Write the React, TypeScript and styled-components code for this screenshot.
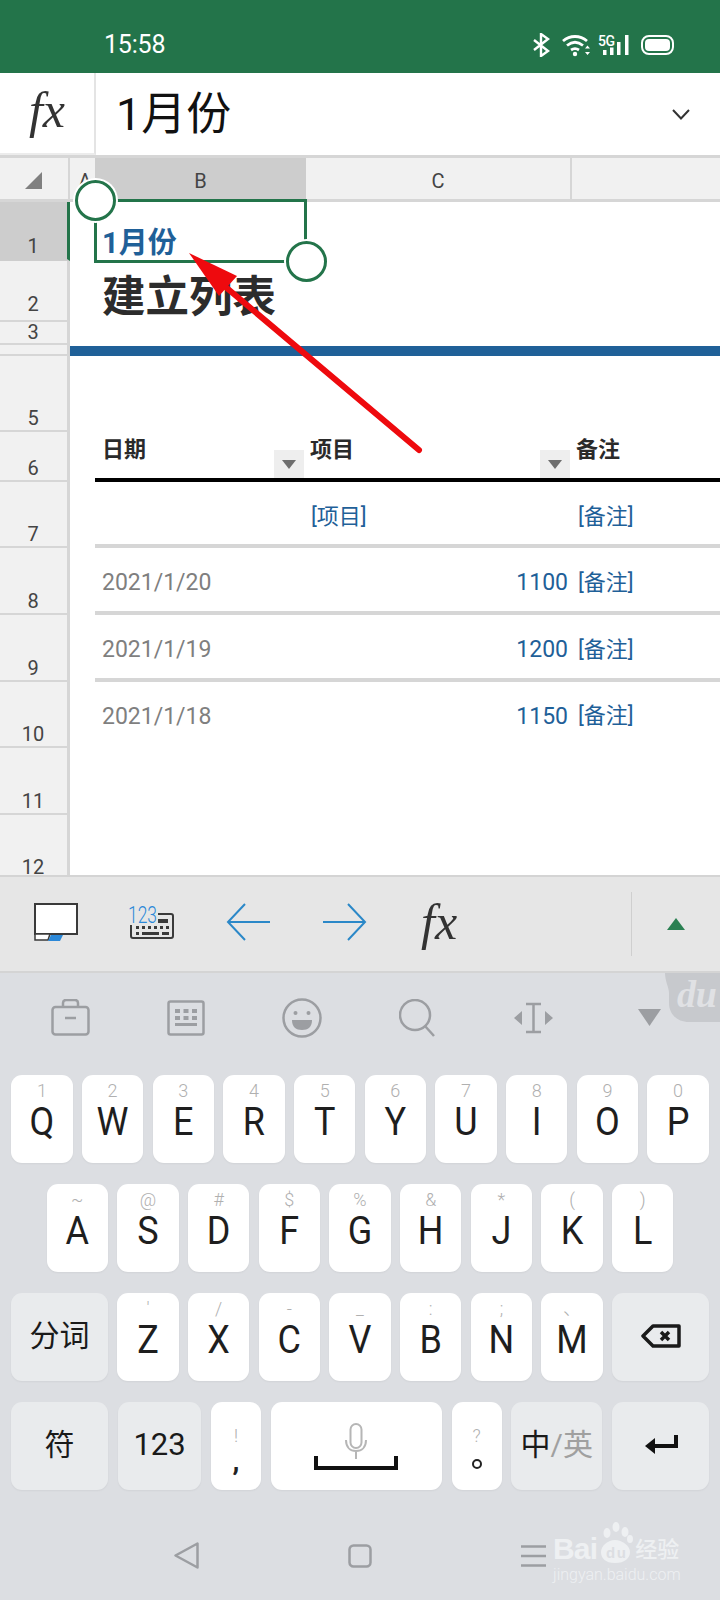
import React from "react";
import styled, { createGlobalStyle } from "styled-components";

const Global = createGlobalStyle`
  html, body { margin: 0; padding: 0; background: #dcdee2; }
  * { box-sizing: border-box; }
`;

const CJK = `Roboto, "Noto Sans CJK SC", sans-serif`;

const Page = styled.div`
  position: relative;
  width: 720px;
  height: 1600px;
  overflow: hidden;
  display: flex;
  flex-direction: column;
  font-family: ${CJK};
`;

/* status bar */
const StatusBar = styled.div`
  height: 73px;
  background: #23744a;
  display: flex;
  align-items: flex-end;
  justify-content: space-between;
  padding: 0 45px 14px 104px;
  color: #fff;
`;
const Time = styled.span`
  font-size: 25px;
  line-height: 28px;
  letter-spacing: -0.2px;
`;
const StatusIcons = styled.div`
  display: flex;
  align-items: center;
  margin-bottom: 2px;
`;

/* formula bar */
const FormulaBar = styled.div`
  height: 85px;
  display: flex;
  background: #fff;
  border-bottom: 3px solid #d6d6d6;
`;
const FxBox = styled.div`
  width: 96px;
  border-right: 2px solid #e4e4e4;
  border-bottom: 2px solid #ececec;
  display: flex;
  align-items: center;
  justify-content: center;
  padding: 0 0 6px 0;
`;
const FxGlyph = styled.span<{ $size: number; $shift?: number }>`
  font-family: "Liberation Serif", serif;
  font-style: italic;
  font-size: ${(p) => p.$size}px;
  line-height: 1;
  color: #333;
  margin-left: ${(p) => p.$shift ?? 0}px;
`;
const FormulaText = styled.div`
  flex: 1;
  padding: 3px 0 0 20px;
  font-size: 45px;
  line-height: 78px;
  color: #111;
`;
const Chevron = styled.div`
  width: 48px;
  display: flex;
  align-items: center;
`;

/* sheet */
const Sheet = styled.div`
  position: relative;
  height: 717px;
  display: flex;
  flex-direction: column;
  background: #fff;
`;
const ColumnHeader = styled.div`
  height: 44px;
  display: grid;
  grid-template-columns: 70px 25px 211px 266px 148px;
  background: #f1f1f1;
  border-bottom: 3px solid #d6d6d6;
`;
const ColCell = styled.div<{ $active?: boolean; $line?: boolean; $nudge?: number }>`
  display: flex;
  align-items: center;
  justify-content: center;
  background: ${(p) => (p.$active ? "#cdcdcd" : "transparent")};
  border-right: ${(p) => (p.$line ? "2px solid #d6d6d6" : "none")};
  font-size: 20px;
  color: #444;
  overflow: hidden;
  height: 41px;
  padding-top: 4px;
  padding-left: ${(p) => p.$nudge ?? 0}px;
`;
const SheetRow = styled.div<{ $h: number }>`
  height: ${(p) => p.$h}px;
  display: grid;
  grid-template-columns: 70px 25px 211px 266px 148px;
  grid-template-rows: ${(p) => p.$h}px;
`;
const RowLabel = styled.div<{ $active?: boolean; $pad?: number; $flush?: boolean; $clip?: boolean }>`
  height: 100%;
  overflow: ${(p) => (p.$clip ? "hidden" : "visible")};
  background: ${(p) => (p.$active ? "#cdcdcd" : "#f1f1f1")};
  border-right: 3px solid ${(p) => (p.$active ? "#23744a" : "#d6d6d6")};
  border-bottom: ${(p) => (p.$flush ? "none" : `2px solid ${p.$active ? "#cdcdcd" : "#d6d6d6"}`)};
  display: flex;
  align-items: flex-end;
  justify-content: center;
  padding-bottom: ${(p) => p.$pad ?? 2}px;
  padding-right: 1px;
  font-size: 20px;
  line-height: ${(p) => (p.$flush ? 16 : 20)}px;
  color: #444;
`;
const ClippedNumber = styled.span`
  margin-bottom: -18px;
`;
const Gutter = styled.div``;
const Band = styled.div`
  grid-column: 2 / -1;
  height: 10px;
  margin-top: 1px;
  background: #1f6098;
`;
const TitleCell = styled.div<{ $size: number; $color: string; $line: number }>`
  grid-column: 3 / -1;
  align-self: end;
  padding-left: 7px;
  font-weight: 700;
  font-size: ${(p) => p.$size}px;
  line-height: ${(p) => p.$line}px;
  color: ${(p) => p.$color};
  white-space: nowrap;
`;
const Cell = styled.div<{ $rule?: "black" | "gray" | "none"; $right?: boolean; $kind?: "head" | "date" | "link"; $left?: number }>`
  position: relative;
  height: 100%;
  display: flex;
  align-items: center;
  justify-content: ${(p) => (p.$right ? "flex-end" : "flex-start")};
  padding: 0 4px 0 ${(p) => p.$left ?? 4}px;
  border-bottom: 4px solid
    ${(p) => (p.$rule === "black" ? "#000" : p.$rule === "gray" ? "#d6d6d6" : "transparent")};
  font-size: ${(p) => (p.$kind === "date" ? 23 : 22)}px;
  font-weight: ${(p) => (p.$kind === "head" ? 700 : 400)};
  color: ${(p) => (p.$kind === "head" ? "#2a2a2a" : p.$kind === "date" ? "#7f7f7f" : "#1f6098")};
  white-space: nowrap;
`;
const CellText = styled.span<{ $up?: number; $blue?: boolean }>`
  margin-bottom: ${(p) => p.$up ?? 0}px;
  color: ${(p) => (p.$blue ? "#1f6098" : "inherit")};
`;
const FilterButton = styled.div`
  position: absolute;
  right: 2px;
  bottom: 0;
  width: 30px;
  height: 28px;
  background: #eeeeee;
  display: flex;
  align-items: center;
  justify-content: center;
`;
const Selection = styled.div`
  position: absolute;
  left: 94px;
  top: 41px;
  width: 213px;
  height: 64px;
  border: 3px solid #23744a;
`;
const Handle = styled.div<{ $corner: "start" | "end" }>`
  position: absolute;
  width: 41px;
  height: 41px;
  border-radius: 50%;
  background: #fff;
  border: 3.5px solid #23744a;
  box-shadow: 0 0 0 2px #fff;
  ${(p) => (p.$corner === "start" ? "left: -22px; top: -22px;" : "right: -23px; bottom: -22px;")}
`;

/* excel toolbar */
const Toolbar = styled.div`
  height: 98px;
  background: #e6e6e6;
  border-top: 2px solid #d4d4d4;
  border-bottom: 2px solid #d4d4d4;
  display: flex;
  align-items: center;
  padding-left: 34px;
`;
const ToolIcons = styled.div`
  flex: 1;
  display: flex;
  align-items: center;
  gap: 52px;
  margin-top: -5px;
`;
const KeyboardGlyph = styled.svg`
  margin-left: -2px;
  overflow: visible;
`;
const ForwardArrow = styled.svg`
  margin-left: 1px;
`;
const ExpandPane = styled.div`
  width: 89px;
  height: 64px;
  border-left: 1px solid #cfcfcf;
  display: flex;
  align-items: center;
  justify-content: center;
`;

/* keyboard */
const Keyboard = styled.div`
  position: relative;
  flex: 1;
  background: #dcdee2;
  display: flex;
  flex-direction: column;
`;
const Candidates = styled.div`
  height: 102px;
  display: flex;
  align-items: center;
  gap: 77px;
  padding: 0 0 13px 51px;
`;
const CursorGlyph = styled.svg`
  margin-right: 7px;
`;
const DuBadge = styled.svg`
  position: absolute;
  top: 0;
  right: 0;
`;
const KeyRows = styled.div`
  display: flex;
  flex-direction: column;
  gap: 21px;
  padding: 0 11px;
`;
const KeyRow = styled.div<{ $spread?: boolean }>`
  display: flex;
  justify-content: ${(p) => (p.$spread ? "space-between" : "center")};
  gap: ${(p) => (p.$spread ? "0" : "9.4px")};
  height: 88px;
`;
const Key = styled.div<{ $w: number; $tone?: "white" | "gray" }>`
  width: ${(p) => p.$w}px;
  height: 88px;
  flex: none;
  border-radius: 11px;
  background: ${(p) => (p.$tone === "gray" ? "#e9ebed" : "#fff")};
  box-shadow: 0 1px 2px rgba(0, 0, 0, 0.05);
  display: flex;
  flex-direction: column;
  align-items: center;
  padding-top: 5px;
  color: #1e1e1e;
`;
const Hint = styled.span`
  height: 22px;
  font-size: 18px;
  font-weight: 300;
  line-height: 22px;
  color: #b0b0b0;
`;
const Letter = styled.span`
  font-size: 36px;
  line-height: 40px;
  transform: scaleY(1.06);
`;
const FuncKey = styled(Key)`
  padding: 0 0 3px;
  justify-content: center;
  font-size: 30px;
  line-height: 40px;
  color: #1a1a1a;
  flex-direction: row;
  align-items: center;
`;
const NumLabel = styled.span`
  font-size: 31px;
`;
const DimText = styled.span`
  color: #a0a0a0;
`;
const PunctKey = styled(Key)`
  padding-top: 23px;
`;
const PunctMark = styled.span`
  font-size: 28px;
  line-height: 28px;
  color: #222;
  font-weight: 700;
`;
const RoundMark = styled.span`
  width: 10px;
  height: 10px;
  margin-top: 12px;
  border-radius: 50%;
  border: 2px solid #222;
`;
const SpaceKey = styled(Key)`
  padding-top: 21px;
`;
const SpaceBar = styled.svg`
  margin-top: -7px;
`;
const NavBar = styled.div`
  flex: 1;
  display: flex;
  align-items: center;
  padding: 21px 0 0 174px;
  gap: 149px;
`;
const Watermark = styled.div`
  position: absolute;
  left: 553px;
  bottom: 14px;
  width: 130px;
  color: #eef0f2;
`;
const MarkTop = styled.div`
  display: flex;
  align-items: flex-end;
  height: 42px;
`;
const MarkBai = styled.span`
  font-family: "Liberation Sans", sans-serif;
  font-weight: 700;
  font-size: 30px;
  line-height: 30px;
  letter-spacing: -0.8px;
`;
const MarkJing = styled.span`
  font-size: 22px;
  line-height: 28px;
  font-weight: 500;
  margin-left: 1px;
`;
const MarkUrl = styled.div`
  font-size: 16px;
  font-weight: 300;
  line-height: 22px;
  white-space: nowrap;
`;

const ArrowOverlay = styled.svg`
  position: absolute;
  left: 0;
  top: 0;
  pointer-events: none;
`;

const rowsTop = ["Q", "W", "E", "R", "T", "Y", "U", "I", "O", "P"];
const hintsTop = ["1", "2", "3", "4", "5", "6", "7", "8", "9", "0"];
const rowsMid = ["A", "S", "D", "F", "G", "H", "J", "K", "L"];
const hintsMid = ["~", "@", "#", "$", "%", "&", "*", "(", ")"];
const rowsLow = ["Z", "X", "C", "V", "B", "N", "M"];
const hintsLow = ["'", "/", "-", "_", ":", ";", "、"];

const dataRows = [
  { n: 8, h: 67, date: "2021/1/20", qty: "1100", rule: "gray" as const },
  { n: 9, h: 67, date: "2021/1/19", qty: "1200", rule: "gray" as const },
  { n: 10, h: 66, date: "2021/1/18", qty: "1150", rule: "none" as const },
];

const StatusGlyphs = () => (
  <svg width="142" height="24" viewBox="0 0 142 24" fill="none">
    {/* bluetooth */}
    <path d="M1 7l14 11-7 5V1l7 5L1 17" stroke="#fff" strokeWidth="2.4" />
    {/* wifi */}
    <path d="M30 8c7-6 17-6 24 0M34 12.500c5-4 11-4 16 0M38 17c3-2 5-2 8 0" stroke="#fff" strokeWidth="2.8" />
    <circle cx="42" cy="21" r="2.200" fill="#fff" />
    <path d="M52 15.500l2.500-3 2.500 3zM52 19l2.500 3 2.500-3z" fill="#fff" />
    {/* 5G signal */}
    <text x="65" y="13" fill="#fff" fontFamily="Roboto" fontSize="14" fontWeight="500" textLength="17">5G</text>
    <rect x="70" y="17" width="3.500" height="5" fill="#fff" />
    <rect x="77" y="14.500" width="3.500" height="7.500" fill="#fff" />
    <rect x="84" y="9" width="3.500" height="13" fill="#fff" />
    <rect x="92" y="2" width="3.500" height="20" fill="#fff" />
    {/* battery */}
    <rect x="109" y="3" width="31" height="18" rx="7" stroke="#fff" strokeWidth="2" />
    <rect x="112" y="6" width="25" height="12" rx="4" fill="#fff" />
  </svg>
);

export default function App() {
  return (
    <Page>
      <Global />
      <StatusBar>
        <Time>15:58</Time>
        <StatusIcons>
          <StatusGlyphs />
        </StatusIcons>
      </StatusBar>

      <FormulaBar>
        <FxBox>
          <FxGlyph $size={50}>fx</FxGlyph>
        </FxBox>
        <FormulaText>1月份</FormulaText>
        <Chevron>
          <svg width="18" height="11" viewBox="0 0 18 11" fill="none">
            <path d="M1 1l8 8.500L17 1" stroke="#333" strokeWidth="2" />
          </svg>
        </Chevron>
      </FormulaBar>

      <Sheet>
        <ColumnHeader>
          <ColCell $line>
            <svg width="18" height="18" viewBox="0 0 18 18">
              <path d="M17 0v17H0z" fill="#808080" />
            </svg>
          </ColCell>
          <ColCell $nudge={5}>A</ColCell>
          <ColCell $active>B</ColCell>
          <ColCell $line>C</ColCell>
          <ColCell />
        </ColumnHeader>

        <SheetRow $h={59}>
          <RowLabel $active $pad={3}>1</RowLabel>
          <Gutter />
          <TitleCell $size={29} $color="#1f6098" $line={36}>1月份</TitleCell>
        </SheetRow>
        <SheetRow $h={61}>
          <RowLabel $pad={6}>2</RowLabel>
          <Gutter />
          <TitleCell $size={43.5} $color="#2c2c2c" $line={49}>建立列表</TitleCell>
        </SheetRow>
        <SheetRow $h={23}>
          <RowLabel $pad={1}>3</RowLabel>
        </SheetRow>
        <SheetRow $h={11}>
          <RowLabel $pad={0} $clip><ClippedNumber>4</ClippedNumber></RowLabel>
          <Band />
        </SheetRow>
        <SheetRow $h={76}>
          <RowLabel>5</RowLabel>
        </SheetRow>
        <SheetRow $h={50}>
          <RowLabel>6</RowLabel>
          <Gutter />
          <Cell $rule="black" $kind="head" $left={7}>
            <CellText $up={16}>日期</CellText>
            <FilterButton>
              <svg width="14" height="9" viewBox="0 0 14 9"><path d="M0 0h14L7 9z" fill="#6e6e6e" /></svg>
            </FilterButton>
          </Cell>
          <Cell $rule="black" $kind="head">
            <CellText $up={16}>项目</CellText>
            <FilterButton>
              <svg width="14" height="9" viewBox="0 0 14 9"><path d="M0 0h14L7 9z" fill="#6e6e6e" /></svg>
            </FilterButton>
          </Cell>
          <Cell $rule="black" $kind="head">
            <CellText $up={16}>备注</CellText>
          </Cell>
        </SheetRow>
        <SheetRow $h={66}>
          <RowLabel>7</RowLabel>
          <Gutter />
          <Cell $rule="gray" />
          <Cell $rule="gray" $kind="link" $left={5}><CellText $up={-2}>[项目]</CellText></Cell>
          <Cell $rule="gray" $kind="link" $left={6}><CellText $up={-2}>[备注]</CellText></Cell>
        </SheetRow>
        {dataRows.map((r) => (
          <SheetRow key={r.n} $h={r.h}>
            <RowLabel>{r.n}</RowLabel>
            <Gutter />
            <Cell $rule={r.rule} $kind="date" $left={7}><CellText $up={-6}>{r.date}</CellText></Cell>
            <Cell $rule={r.rule} $kind="date" $right>
              <CellText $up={-6} $blue>{r.qty}</CellText>
            </Cell>
            <Cell $rule={r.rule} $kind="link" $left={6}><CellText>[备注]</CellText></Cell>
          </SheetRow>
        ))}
        <SheetRow $h={67}>
          <RowLabel>11</RowLabel>
        </SheetRow>
        <SheetRow $h={60}>
          <RowLabel $flush $pad={0}>12</RowLabel>
        </SheetRow>

        <Selection>
          <Handle $corner="start" />
          <Handle $corner="end" />
        </Selection>
      </Sheet>

      <Toolbar>
        <ToolIcons>
          <svg width="44" height="38" viewBox="0 0 44 38">
            <rect x="1" y="1" width="42" height="30" fill="#fff" stroke="#3a3a3a" strokeWidth="2" />
            <path d="M1 31h15l-2 6H1z" fill="#fff" stroke="#3a3a3a" strokeWidth="1.500" />
            <path d="M17 32h12l-3 6H14z" fill="#2b88d8" />
          </svg>
          <KeyboardGlyph width="46" height="34" viewBox="0 0 46 34">
            <rect x="3" y="9" width="42" height="24" rx="2" fill="none" stroke="#3a3a3a" strokeWidth="2" />
            <path d="M28 14h12v4H28zM8 21h3v3H8zM14 21h3v3h-3zM20 21h3v3h-3zM26 21h3v3h-3zM32 21h3v3h-3zM38 21h3v3h-3zM8 27h3v3H8zM14 27h17v3H14zM34 27h7v3h-7z" fill="#3a3a3a" />
            <rect x="0" y="0" width="30" height="20" fill="#e6e6e6" />
            <text x="0" y="18" fill="#2b88d8" fontFamily="Roboto" fontSize="23" fontWeight="300" textLength="29" lengthAdjust="spacingAndGlyphs">123</text>
          </KeyboardGlyph>
          <svg width="44" height="38" viewBox="0 0 44 38" fill="none">
            <path d="M44 19H2M19 1L2 19l17 18" stroke="#2b88c8" strokeWidth="2" />
          </svg>
          <ForwardArrow width="44" height="38" viewBox="0 0 44 38" fill="none">
            <path d="M0 19h42M25 1l17 18-17 18" stroke="#2b88c8" strokeWidth="2" />
          </ForwardArrow>
          <FxGlyph $size={50} $shift={2}>fx</FxGlyph>
        </ToolIcons>
        <ExpandPane>
          <svg width="18" height="12" viewBox="0 0 18 12"><path d="M9 0l9 12H0z" fill="#2a8052" /></svg>
        </ExpandPane>
      </Toolbar>

      <Keyboard>
        <Candidates>
          <svg width="39" height="37" viewBox="0 0 39 37" fill="none" stroke="#9c9ea2" strokeWidth="2.500">
            <rect x="1.500" y="8" width="36" height="27.500" rx="3" />
            <path d="M12 8V4c0-2 1-3 3-3h9c2 0 3 1 3 3v4M14 19h11" />
          </svg>
          <svg width="38" height="36" viewBox="0 0 38 36" fill="none">
            <rect x="1.500" y="1.500" width="35" height="33" rx="2" stroke="#9c9ea2" strokeWidth="2.500" />
            <path d="M8 9h5v4H8zM16.500 9h5v4h-5zM25 9h5v4h-5zM8 16h5v4H8zM16.500 16h5v4h-5zM25 16h5v4h-5zM8 23h22v3H8z" fill="#9c9ea2" />
          </svg>
          <svg width="40" height="40" viewBox="0 0 40 40" fill="none">
            <circle cx="20" cy="20" r="18.500" stroke="#9c9ea2" strokeWidth="2.500" />
            <circle cx="13.500" cy="15" r="2" fill="#9c9ea2" />
            <circle cx="26.500" cy="15" r="2" fill="#9c9ea2" />
            <path d="M10 22h20c0 7-4 10-10 10s-10-3-10-10z" fill="#9c9ea2" />
          </svg>
          <svg width="37" height="38" viewBox="0 0 37 38" fill="none" stroke="#9c9ea2" strokeWidth="2.500">
            <circle cx="16" cy="16" r="15" />
            <path d="M26 27l9 10" />
          </svg>
          <CursorGlyph width="41" height="32" viewBox="0 0 41 32">
            <path d="M13 2h15M13 30h15M20.500 2v28" stroke="#9c9ea2" strokeWidth="2.500" fill="none" />
            <path d="M9 9v14L1 16zM32 9v14l8-7z" fill="#9c9ea2" />
          </CursorGlyph>
          <svg width="23" height="17" viewBox="0 0 23 17"><path d="M0 0h23L11.500 17z" fill="#9c9ea2" /></svg>
        </Candidates>
        <DuBadge width="55" height="50" viewBox="0 0 55 50">
          <path d="M0 0h55v49H24C12 49 4 41 4 30V20C4 15 0 8 0 0z" fill="#c7c9cd" />
          <text x="12" y="34" fill="#e0e1e4" fontFamily="Liberation Serif" fontStyle="italic" fontWeight="700" fontSize="38" textLength="40">du</text>
        </DuBadge>

        <KeyRows>
          <KeyRow>
            {rowsTop.map((k, i) => (
              <Key key={k} $w={61.3}>
                <Hint>{hintsTop[i]}</Hint>
                <Letter>{k}</Letter>
              </Key>
            ))}
          </KeyRow>
          <KeyRow>
            {rowsMid.map((k, i) => (
              <Key key={k} $w={61.3}>
                <Hint>{hintsMid[i]}</Hint>
                <Letter>{k}</Letter>
              </Key>
            ))}
          </KeyRow>
          <KeyRow>
            <FuncKey $w={97} $tone="gray">分词</FuncKey>
            {rowsLow.map((k, i) => (
              <Key key={k} $w={61.3}>
                <Hint>{hintsLow[i]}</Hint>
                <Letter>{k}</Letter>
              </Key>
            ))}
            <FuncKey $w={97} $tone="gray">
              <svg width="40" height="24" viewBox="0 0 40 24" fill="none">
                <path d="M12 2h26v20H12L2 12z" stroke="#1a1a1a" strokeWidth="3.500" strokeLinejoin="round" />
                <path d="M20 8l8 8M28 8l-8 8" stroke="#1a1a1a" strokeWidth="3.500" />
              </svg>
            </FuncKey>
          </KeyRow>
          <KeyRow $spread>
            <FuncKey $w={97} $tone="gray">符</FuncKey>
            <FuncKey $w={83.6} $tone="gray"><NumLabel>123</NumLabel></FuncKey>
            <PunctKey $w={50}>
              <Hint>!</Hint>
              <PunctMark>,</PunctMark>
            </PunctKey>
            <SpaceKey $w={171}>
              <svg width="24" height="40" viewBox="0 0 24 40" fill="none" stroke="#b6b6b6" strokeWidth="2">
                <rect x="6.500" y="1" width="11" height="24" rx="5.500" />
                <path d="M2 17c0 7 4 11 10 11s10-4 10-11M12 28v8" />
              </svg>
              <SpaceBar width="84" height="15" viewBox="0 0 84 15" fill="none">
                <path d="M2 0v12h80V0" stroke="#111" strokeWidth="4" />
              </SpaceBar>
            </SpaceKey>
            <PunctKey $w={50}>
              <Hint>?</Hint>
              <RoundMark />
            </PunctKey>
            <FuncKey $w={91} $tone="gray">
              <span>中</span>
              <DimText>/英</DimText>
            </FuncKey>
            <FuncKey $w={97} $tone="gray">
              <svg width="34" height="20" viewBox="0 0 34 20" fill="none">
                <path d="M32 0v11H5" stroke="#111" strokeWidth="4" />
                <path d="M11 3L1 11l10 8z" fill="#111" />
              </svg>
            </FuncKey>
          </KeyRow>
        </KeyRows>

        <NavBar>
          <svg width="25" height="27" viewBox="0 0 25 27" fill="none">
            <path d="M23.500 1.500v24L1.500 13.500z" stroke="#9c9ea2" strokeWidth="2.500" strokeLinejoin="round" />
          </svg>
          <svg width="24" height="24" viewBox="0 0 24 24" fill="none">
            <rect x="1.500" y="1.500" width="21" height="21" rx="4" stroke="#9c9ea2" strokeWidth="2.500" />
          </svg>
          <svg width="25" height="22" viewBox="0 0 25 22" fill="none">
            <path d="M0 1.500h25M0 11h25M0 20.500h25" stroke="#9c9ea2" strokeWidth="2.500" />
          </svg>
        </NavBar>

        <Watermark>
          <MarkTop>
            <MarkBai>Bai</MarkBai>
            <svg width="37" height="42" viewBox="0 0 37 42">
              <ellipse cx="10" cy="11" rx="3.500" ry="5" fill="#eef0f2" />
              <ellipse cx="19" cy="5" rx="3.500" ry="5" fill="#eef0f2" />
              <ellipse cx="28" cy="10" rx="3.500" ry="5" fill="#eef0f2" />
              <ellipse cx="33" cy="17" rx="3" ry="4" fill="#eef0f2" />
              <path d="M4 30c0-6 7-12 14-12s15 6 15 12-5 11-15 11S4 36 4 30z" fill="#eef0f2" />
              <text x="9" y="36" fill="#dcdee2" fontFamily="Liberation Sans" fontWeight="700" fontSize="15" textLength="20">du</text>
            </svg>
            <MarkJing>经验</MarkJing>
          </MarkTop>
          <MarkUrl>jingyan.baidu.com</MarkUrl>
        </Watermark>
      </Keyboard>

      <ArrowOverlay width="720" height="1600" viewBox="0 0 720 1600" fill="none">
        <path d="M419 450L222 284" stroke="#ee0a0e" strokeWidth="6" strokeLinecap="round" />
        <path d="M189 253L237 276L219 296z" fill="#ee0a0e" />
      </ArrowOverlay>
    </Page>
  );
}
